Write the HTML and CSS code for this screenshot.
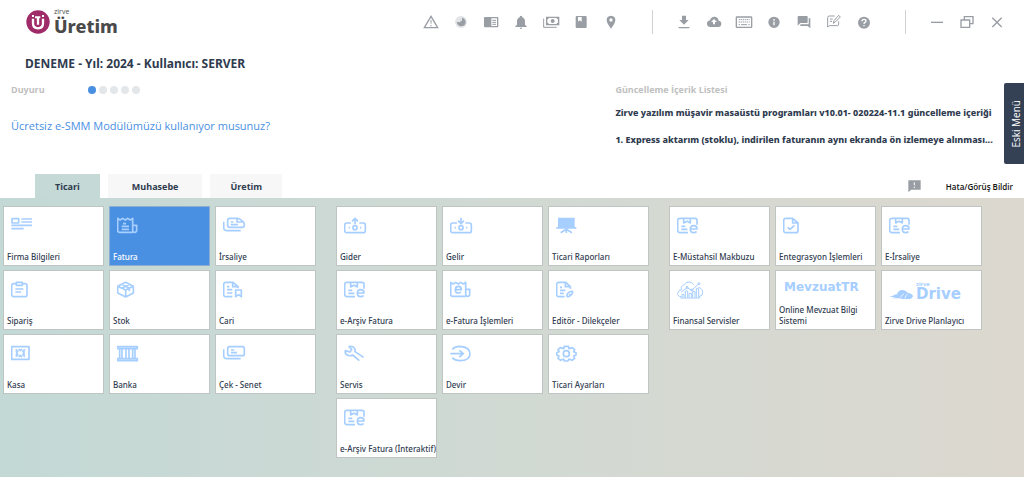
FILE: index.html
```html
<!DOCTYPE html>
<html lang="tr">
<head>
<meta charset="utf-8">
<meta name="viewport" content="width=device-width, initial-scale=1">
<title>Zirve Üretim</title>
<link rel="stylesheet" href="styles.css">
</head>
<body>
<svg class="sprite" aria-hidden="true">
  <symbol id="e-doc" viewBox="0 0 81 60">
    <path d="M33 50H9q-7 0-7-7V13q0-6 7-6h45q6 0 6 6v13M20 8v13l10-5 10 5V8M13 31h12M13 40h18"/>
    <path d="M40 39h20q0-10-10-10T40 40q0 10 10 10 5 0 9-3"/>
  </symbol>
  <symbol id="banknote" viewBox="0 0 81 60">
    <path d="M21 21H8q-6 0-6 6v17q0 6 6 6h50q6 0 6-6V27q0-6-6-6H46"/><circle cx="33" cy="35" r="6"/><path d="M14 35h4M48 35h4"/>
  </symbol>
</svg>

<header class="topbar">
  <a class="brand" href="#" aria-label="Zirve Üretim">
    <svg class="brand-mark" viewBox="0 0 72 72" aria-hidden="true">
      <circle cx="36" cy="36" r="35" fill="#a02b69"/>
      <path d="M21 26v14q0 15 15 15t15-15V26M36 22v22" fill="none" stroke="#fff" stroke-width="7"/>
      <path d="M21 15v6M51 15v6M27 22h16" stroke="#fff" stroke-width="6" fill="none"/>
    </svg>
    <span class="brand-words"><small>zirve</small><b>Üretim</b></span>
  </a>
  <nav class="tools" aria-label="Araçlar">
    <button aria-label="Uyarılar"><svg viewBox="0 0 54 54"><path class="l w" d="M27 10L7 44h40z"/><path class="l" d="M27 21v11M27 36v4"/></svg></button>
    <button aria-label="Durum"><svg viewBox="0 0 54 54"><circle cx="27" cy="27" r="18" fill="#e2e4e7" stroke="none"/><path d="M14 27l12 1-1-5 5 1V14q10 2 11 13-1 13-14 13-10-1-13-13z"/></svg></button>
    <button aria-label="Haberler"><svg viewBox="0 0 54 54"><path fill-rule="evenodd" d="M9 12h37q3 0 3 3v25q0 3-3 3H9q-3 0-3-3V15q0-3 3-3zm19 4v23h17V16z"/><path class="l" d="M31 22h11M31 28h11M31 34h11"/></svg></button>
    <button aria-label="Bildirimler"><svg viewBox="0 0 54 54"><path d="M27 8q4 0 4 5 8 3 8 13v9l5 5v2H10v-2l5-5v-9q0-10 8-13 0-5 4-5zM23 44h8q-1 4-4 4t-4-4z"/></svg></button>
    <button aria-label="Ödemeler"><svg viewBox="0 0 54 54"><path fill-rule="evenodd" d="M12 11h40v26H12zm8 4q0 4-4 4v10q4 0 4 4h24q0-4 4-4V19q-4 0-4-4z"/><circle cx="32" cy="24" r="6"/><path class="l" d="M5 17v26h39"/></svg></button>
    <button aria-label="Defter"><svg viewBox="0 0 54 54"><path fill-rule="evenodd" d="M15 9h26q3 0 3 3v30q0 3-3 3H15q-4 0-4-4V13q0-4 4-4zm3 3v14l5-4 6 4V12z"/></svg></button>
    <button aria-label="Konum"><svg viewBox="0 0 54 54"><path fill-rule="evenodd" d="M27 8q13 1 13 13 0 9-13 26Q14 30 14 21 14 9 27 8zm0 8a5 5 0 100 10 5 5 0 000-10z"/></svg></button>
  </nav>
  <nav class="tools ruled" aria-label="Destek">
    <button aria-label="İndir"><svg viewBox="0 0 54 54"><path d="M21 8h12v13h8L27 35 13 21h8zM11 42h32v4H11z"/></svg></button>
    <button aria-label="Buluta yükle"><svg viewBox="0 0 54 54"><path fill-rule="evenodd" d="M16 42Q6 41 6 32q0-8 9-10 3-11 13-11 11 0 13 12 8 1 8 9 0 9-9 10zM24 34h6v-7h6l-9-9-9 9h6z"/></svg></button>
    <button aria-label="Klavye"><svg viewBox="0 0 54 54"><rect class="l w" x="4" y="12" width="46" height="31" rx="2"/><path class="l" stroke-dasharray="4 2" d="M11 20h33M11 27h33"/><path class="l" d="M18 35h18M11 35h4M40 35h4"/></svg></button>
    <button aria-label="Bilgi"><svg viewBox="0 0 54 54"><path fill-rule="evenodd" d="M27 11a17 17 0 100 34 17 17 0 000-34zm-2 7h4v5h-4zm0 8h4v11h-4z"/></svg></button>
    <button aria-label="Sohbet"><svg viewBox="0 0 54 54"><path d="M10 9h26q2 0 2 2v17q0 2-2 2H16l-8 8V11q0-2 2-2zM41 16h5v30l-8-7H16v-5h25z"/></svg></button>
    <button aria-label="Not yaz"><svg viewBox="0 0 54 54"><path class="l" d="M29 9H13q-5 0-5 5v28l6-4h23q4 0 4-5v-8M15 18h8M15 25h6M25 31l2-8L41 7l5 5-15 15z"/></svg></button>
    <button aria-label="Yardım"><svg viewBox="0 0 54 54"><circle cx="27" cy="29" r="18"/><path d="M21 25q0-6 6-6t6 5q0 3-4 5-2 1-2 4M27 36v4" fill="none" stroke="#fff" stroke-width="4"/></svg></button>
  </nav>
  <div class="tools ruled">
    <button aria-label="Simge durumuna küçült"><svg viewBox="0 0 54 54"><path class="l w" d="M9 28h36"/></svg></button>
    <button aria-label="Önceki boyut"><svg viewBox="0 0 54 54"><path class="l w" d="M19 20v-9h26v21h-9M9 21h26v22H9z"/></svg></button>
    <button aria-label="Kapat"><svg viewBox="0 0 54 54"><path class="l w" d="M13 14l28 28M41 14L13 42"/></svg></button>
  </div>
</header>

<main>
  <h1 class="session">DENEME - Yıl: 2024 - Kullanıcı: SERVER</h1>
  <div class="news">
    <section>
      <div class="news-head">
        <h2>Duyuru</h2>
        <div class="dots">
          <button class="on" aria-label="Duyuru 1"></button><button aria-label="Duyuru 2"></button><button aria-label="Duyuru 3"></button><button aria-label="Duyuru 4"></button><button aria-label="Duyuru 5"></button>
        </div>
      </div>
      <a class="notice" href="#">Ücretsiz e-SMM Modülümüzü kullanıyor musunuz?</a>
    </section>
    <section class="updates">
      <h2>Güncelleme İçerik Listesi</h2>
      <p>Zirve yazılım müşavir masaüstü programları v10.01- 020224-11.1 güncelleme içeriği</p>
      <p>1. Express aktarım (stoklu), indirilen faturanın aynı ekranda ön izlemeye alınması...</p>
    </section>
  </div>
  <button class="old-menu">Eski Menü</button>

  <div class="tabbar">
    <div class="tabs" role="tablist">
      <button role="tab" aria-selected="true">Ticari</button>
      <button role="tab" aria-selected="false">Muhasebe</button>
      <button role="tab" aria-selected="false">Üretim</button>
    </div>
    <button class="feedback">
      <svg viewBox="0 0 39 36" aria-hidden="true"><path d="M1 1h37v28H10l-9 7z" fill="#999da4"/><path d="M19 7v9M19 20v4" stroke="#fff" stroke-width="3"/></svg>
      Hata/Görüş Bildir
    </button>
  </div>

  <div class="panel" role="tabpanel">
    <div class="group">
      <button class="tile"><svg viewBox="0 0 81 60"><path d="M3 8h20v13H3zM31 9h32M31 18h32M1 28h62M1 38h37"/></svg><span>Firma Bilgileri</span></button>
      <button class="tile active"><svg viewBox="0 0 81 60"><path d="M47 49H8q-6 0-6-6V7l7 5 8-5 8 5 7-5 8 5 7-5v35q0 7 6 7t6-6V28H47M18 23h9M14 31h22M14 40h22"/></svg><span>Fatura</span></button>
      <button class="tile"><svg viewBox="0 0 81 60"><path d="M20 7h24q17 6 20 17v4q0 6-6 6H20q-6 0-6-6V13q0-6 6-6zM42 8v10h17M23 18h8M23 26h22M2 17v18q0 9 9 9h42"/></svg><span>İrsaliye</span></button>
      <button class="tile"><svg viewBox="0 0 81 60"><path d="M15 11H8q-6 0-6 6v27q0 6 6 6h34q6 0 6-6V17q0-6-6-6h-7M16 7h18v9H16zM13 27h24M13 36h17"/></svg><span>Sipariş</span></button>
      <button class="tile"><svg viewBox="0 0 81 60"><path d="M26 7l23 12v20L26 51 2 39V19zM2 19l24 11 23-11M26 30v20M14 13l23 12v9M38 13L14 25"/></svg><span>Stok</span></button>
      <button class="tile"><svg viewBox="0 0 81 60"><path d="M28 50H8q-6 0-6-6V13q0-6 6-6h22l15 13v5M29 8v12h15M12 20h7M12 29h16M12 39h16M38 30h17v20l-8-6-9 6z"/></svg><span>Cari</span></button>
      <button class="tile"><svg viewBox="0 0 81 60"><path d="M2 8h52v38H2zM14 16l8 7M42 16l-8 7M14 38l8-7M42 38l-8-7M23 15l5 5 5-5M23 39l5-5 5 5M15 22l4 5-4 5M41 22l-4 5 4 5"/></svg><span>Kasa</span></button>
      <button class="tile"><svg viewBox="0 0 81 60"><path d="M1 8h60v6H1zM1 44h60v6H1zM8 15v28M15 15v28M27 15v28M36 15v28M47 15v28M54 15v28"/></svg><span>Banka</span></button>
      <button class="tile"><svg viewBox="0 0 81 60"><rect x="14" y="8" width="50" height="27" rx="6"/><path d="M24 18h10M24 26h18M2 16v19q0 9 9 9h42"/></svg><span>Çek - Senet</span></button>
    </div>
    <div class="group">
      <button class="tile"><svg viewBox="0 0 81 60"><use href="#banknote" width="81" height="60"/><path d="M33 25V7M24 16l9-9 9 9"/></svg><span>Gider</span></button>
      <button class="tile"><svg viewBox="0 0 81 60"><use href="#banknote" width="81" height="60"/><path d="M33 5v17M24 14l9 9 9-9"/></svg><span>Gelir</span></button>
      <button class="tile"><svg viewBox="0 0 81 60"><path class="solid" d="M6 5h50v28h5v5H1v-5h5z"/><path d="M31 35v16M31 40L14 50M31 40l17 10"/></svg><span>Ticari Raporları</span></button>
      <button class="tile"><svg viewBox="0 0 81 60"><use href="#e-doc" width="81" height="60"/></svg><span>e-Arşiv Fatura</span></button>
      <button class="tile"><svg viewBox="0 0 81 60"><path d="M47 49H8q-6 0-6-6V7l7 5 8-5 8 5 7-5 8 5 7-5v35q0 7 6 7t6-6V28H47M16 29h18q0-10-9-10t-9 10 9 10q5 0 8-3"/></svg><span>e-Fatura İşlemleri</span></button>
      <button class="tile"><svg viewBox="0 0 81 60"><path d="M26 50H8q-6 0-6-6V13q0-6 6-6h21l14 13v6M28 8v12h14M12 22h6M12 31h16M12 40h11M33 49q-1-10 8-13 8-4 9 0t-6 10-11 3zM40 42l4 4"/></svg><span>Editör - Dilekçeler</span></button>
      <button class="tile"><svg viewBox="0 0 81 60"><path d="M14 8q11-3 17 4 4 5 2 11l26 17M14 8l9 8-5 8-14-4q-2 11 8 14 8 3 14-1l20 17"/></svg><span>Servis</span></button>
      <button class="tile"><svg viewBox="0 0 81 60"><path d="M7 16Q15 7 30 7q30 2 30 22T30 50Q15 50 7 41M1 29h38M28 19l12 10-12 10"/></svg><span>Devir</span></button>
      <button class="tile"><svg viewBox="0 0 81 60"><path d="M25 7h12l2 7 10-3 7 6-3 6 7 3v7l-7 3 3 7-8 6-9-4-3 6H25l-2-6-9 4-8-6 3-7-7-3v-7l7-3-3-6 7-6 10 3z"/><circle cx="31" cy="29" r="9"/></svg><span>Ticari Ayarları</span></button>
      <button class="tile"><svg viewBox="0 0 81 60"><use href="#e-doc" width="81" height="60"/></svg><span>e-Arşiv Fatura (İnteraktif)</span></button>
    </div>
    <div class="group">
      <button class="tile"><svg viewBox="0 0 81 60"><use href="#e-doc" width="81" height="60"/></svg><span>E-Müstahsil Makbuzu</span></button>
      <button class="tile"><svg viewBox="0 0 81 60"><path d="M29 7H8q-6 0-6 6v31q0 6 6 6h30q7 0 7-6V21zM29 8v13h15M14 34l7 6 13-12"/></svg><span>Entegrasyon İşlemleri</span></button>
      <button class="tile"><svg viewBox="0 0 81 60"><use href="#e-doc" width="81" height="60"/></svg><span>E-İrsaliye</span></button>
      <button class="tile"><svg class="thin" viewBox="0 0 81 60"><path d="M14 50Q1 50 2 40q1-9 11-11-2-12 9-15 4-8 14-8 9 0 14 8M64 22q14 4 13 16 0 11-12 12M10 54h60M15 53V43h6v10M25 53V33h7v20M36 53V40h7v13M47 53V35h7v18M58 53V26h7v27M12 37l18-14 14 8 22-20M44 30v2"/><circle cx="30" cy="22" r="3"/><circle cx="45" cy="30" r="3"/><circle cx="66" cy="11" r="3"/></svg><span>Finansal Servisler</span></button>
      <button class="tile"><b class="mevzuat" aria-hidden="true">MevzuatTR</b><span>Online Mevzuat Bilgi Sistemi</span></button>
      <button class="tile"><b class="drive" aria-hidden="true"><svg viewBox="0 0 72 36"><path class="solid" d="M30 28H8l12-4H0l17-5H10l14-3q2-11 14-13 11-2 18 8 14 2 16 10-1 7-10 9H42z"/><path class="cut" d="M35 26q2-9 10-11M48 28q1-9 8-13"/></svg><i><small>zirve</small>Drive</i></b><span>Zirve Drive Planlayıcı</span></button>
    </div>
  </div>
</main>
</body>
</html>
```

FILE: styles.css
```css
* { box-sizing: border-box; }

body {
  margin: 0;
  min-height: 100vh;
  display: flex;
  flex-direction: column;
  background: #fff;
  color: #2f3b4f;
  font-family: "Open Sans", "Noto Sans", sans-serif;
}

button {
  margin: 0;
  padding: 0;
  border: 0;
  background: none;
  color: inherit;
  font: inherit;
  cursor: pointer;
}

h1, h2, p { margin: 0; }

.sprite { position: absolute; width: 0; height: 0; }

/* Top bar */
.topbar {
  display: flex;
  align-items: center;
  height: 44px;
  padding: 0 12px 0 26px;
}
.brand {
  display: flex;
  align-items: center;
  gap: 4px;
  margin-right: auto;
  color: #4a4a4a;
  text-decoration: none;
}
.brand-mark { width: 24px; height: 24px; }
.brand-words { display: flex; flex-direction: column; }
.brand-words small { font-size: 7px; line-height: 8px; }
.brand-words b { font-family: "Noto Sans", sans-serif; font-size: 18px; font-weight: 800; line-height: 20px; }

.tools { display: flex; align-items: center; height: 24px; }
.tools.ruled { margin-left: 26px; padding-left: 16px; border-left: 1px solid #d0d2d5; }
.tools button { display: grid; place-items: center; width: 30px; height: 24px; }
.tools svg { width: 18px; height: 18px; fill: #999da4; }
.tools .l { fill: none; stroke: #999da4; stroke-width: 3; }
.tools .w { stroke-width: 4; }

/* Announcements */
main { flex: 1; display: flex; flex-direction: column; }
.session {
  padding: 11px 25px 9px;
  font-family: "Noto Sans", sans-serif;
  font-size: 12px;
  font-weight: 700;
  line-height: 18px;
}
.news { display: grid; grid-template-columns: 60% 40%; padding-bottom: 26px; }
.news section { padding-left: 11px; }
.news .updates { padding: 0 26px 0 1px; }
.news h2 { color: #bfbfbf; font-size: 9px; font-weight: 700; line-height: 16px; }
.news-head { display: flex; gap: 43px; align-items: center; margin-bottom: 15px; }
.dots { display: flex; gap: 3px; }
.dots button { width: 8px; height: 8px; border-radius: 50%; background: #e3e7ea; }
.dots .on { background: #4a90e2; }
.notice { color: #4a90e2; font-size: 11px; line-height: 20px; text-decoration: none; }
.updates p {
  margin-top: 7px;
  font-family: "Noto Sans", sans-serif;
  font-size: 9px;
  font-weight: 800;
  line-height: 16px;
  white-space: nowrap;
}
.updates p + p { margin-top: 11px; }

.old-menu {
  position: absolute;
  top: 83px;
  right: 0;
  width: 20px;
  height: 81px;
  border-radius: 2px 0 0 2px;
  background: #344054;
  color: #fff;
  font-size: 10px;
  line-height: 24px;
  writing-mode: sideways-lr;
}

/* Tabs */
.tabbar { display: flex; justify-content: space-between; padding: 0 11px 0 35px; }
.tabs { display: flex; gap: 8px; }
.tabs button {
  height: 24px;
  padding: 0 20px;
  background: #f7f7f7;
  font-size: 9px;
  font-weight: 700;
}
.tabs button:nth-child(2) { padding: 0 24px; }
.tabs [aria-selected="true"] { background: #c5d9d6; }
.feedback { display: flex; align-items: center; gap: 25px; color: #111; font-size: 8px; font-weight: 600; }
.feedback svg { width: 13px; height: 12px; }

/* Module tiles */
.panel {
  flex: 1;
  display: flex;
  align-items: flex-start;
  gap: 20px;
  padding: 8px 3px 18px;
  background: linear-gradient(90deg, #c3d9d6, #d1d9d3 50%, #dcd8cf);
}
.group { display: grid; grid-template-columns: repeat(3, 101px); grid-auto-rows: 60px; gap: 4px 5px; }
.tile {
  display: flex;
  flex-direction: column;
  justify-content: space-between;
  align-items: flex-start;
  padding: 9px 3px 3px;
  border: 1px solid #bfc5c3;
  background: #fff;
  font-family: "Noto Sans", sans-serif;
  font-size: 8px;
  font-weight: 500;
  line-height: 11px;
  text-align: left;
}
.tile > span { white-space: nowrap; }
.tile > .mevzuat + span { white-space: normal; }
.tile > svg {
  width: 27px;
  height: 20px;
  margin-left: 4px;
  fill: none;
  stroke: #a6ceff;
  stroke-width: 5;
  stroke-linejoin: round;
}
.tile > .thin { stroke-width: 3; }
.tile .solid { fill: #a6ceff; stroke: none; }
.tile .cut { fill: none; stroke: #fff; stroke-width: 2; }
.tile.active { border-color: #8daed0; background: #4a90e2; color: #fff; }
.mevzuat, .drive { color: #a6ceff; font-family: "DejaVu Sans", sans-serif; font-weight: 700; }
.mevzuat { padding-left: 5px; font-size: 12px; line-height: 14px; }
.drive { display: flex; align-items: flex-end; gap: 3px; padding: 2px 0 0 4px; }
.drive svg { width: 24px; height: 12px; }
.drive i { display: flex; flex-direction: column; font-size: 15px; font-style: normal; line-height: 14px; }
.drive small { font-size: 5px; font-weight: 700; line-height: 5px; }
```
